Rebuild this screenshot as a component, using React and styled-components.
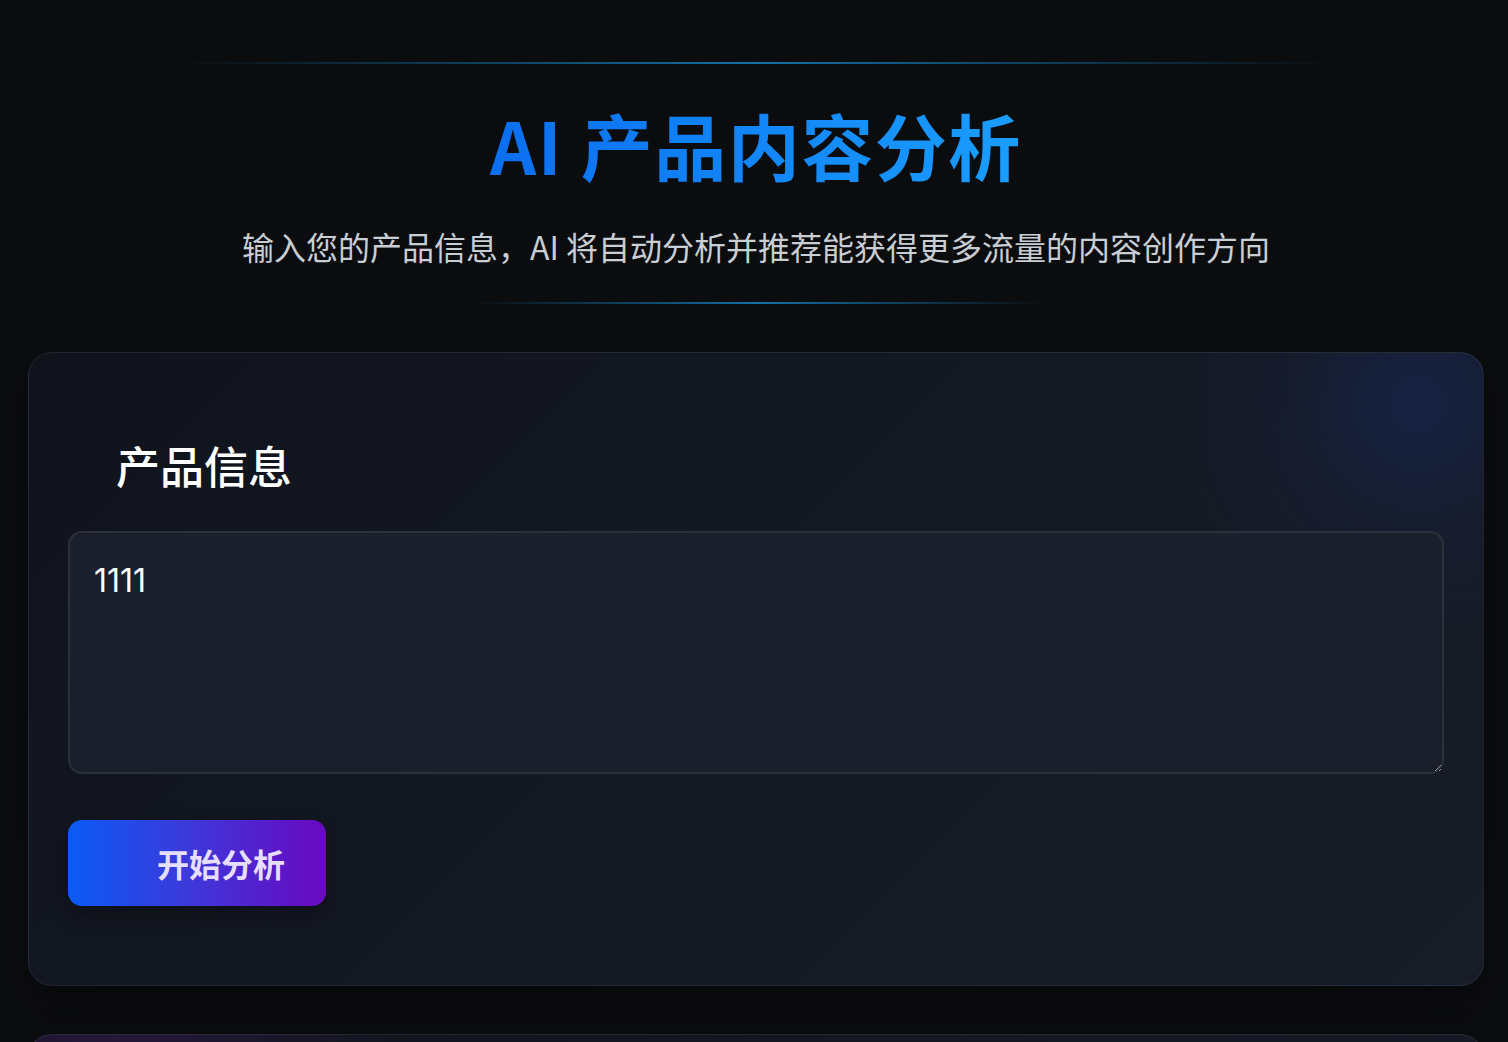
import React, { useState } from "react";
import styled, { createGlobalStyle } from "styled-components";

const Global = createGlobalStyle`
  html, body { margin: 0; padding: 0; background: #0b0c0e; }
  body {
    font-family: "Noto Sans CJK SC", "Noto Sans", Inter, sans-serif;
    color: #fff;
  }
  * { box-sizing: border-box; }
`;

const Page = styled.div`
  height: 1042px;
  padding: 62px 24px 0 28px;
  background: linear-gradient(180deg, #0b0c0e 0%, #0c0d10 100%);
  overflow: hidden;
`;

const Header = styled.header`
  display: flex;
  flex-direction: column;
  align-items: center;
`;

const Divider = styled.div`
  height: 2px;
  width: ${(p) => p.$w}px;
  margin-left: ${(p) => p.$shift || 0}px;
  background: linear-gradient(90deg, rgba(14, 165, 233, 0) 0%, rgba(22, 150, 225, 0.9) 50%, rgba(14, 165, 233, 0) 100%);
  opacity: 0.8;
`;

const Title = styled.h1`
  margin: 37px 0 0;
  font-size: 72px;
  line-height: 86px;
  font-weight: 700;
  letter-spacing: 1.5px;
  background: linear-gradient(90deg, #0b6ef0 0%, #1a9eff 100%);
  -webkit-background-clip: text;
  background-clip: text;
  color: transparent;
`;

const Subtitle = styled.p`
  margin: 35px 0 32px;
  font-size: 32px;
  line-height: 48px;
  letter-spacing: 0;
  color: #c9cdd4;
`;

const Card = styled.section`
  margin-top: 48px;
  border-radius: 24px;
  border: 1px solid rgba(255, 255, 255, 0.07);
  background:
    radial-gradient(circle at 95.5% 8%, rgba(24, 44, 100, 0.5) 0%, rgba(24, 44, 100, 0.15) 8%, rgba(24, 44, 100, 0) 16%),
    linear-gradient(135deg, #10131b 0%, #141924 55%, #171c27 100%);
  box-shadow: 0 20px 40px rgba(0, 0, 0, 0.35);
  padding: 84px 39px 79px;
`;

const NextCard = styled(Card)`
  height: 120px;
  padding: 0;
  background:
    radial-gradient(circle at 6% 0%, rgba(70, 30, 110, 0.35) 0%, rgba(70, 30, 110, 0) 20%),
    linear-gradient(135deg, #12141d 0%, #151a25 100%);
`;

const SectionTitle = styled.h2`
  margin: 0 0 37px;
  padding-left: 48px;
  font-size: 44px;
  line-height: 57px;
  font-weight: 500;
  color: #fff;
`;

const Input = styled.textarea`
  display: block;
  width: 100%;
  height: 243px;
  padding: 25px 24px 20px;
  border-radius: 14px;
  border: 2px solid #2a303c;
  background: #1a1f2b;
  color: #fff;
  font-family: Inter, "Noto Sans CJK SC", sans-serif;
  font-size: 32px;
  line-height: 46px;
  resize: vertical;
  outline: none;
`;

const Button = styled.button`
  margin-top: 46px;
  height: 86px;
  padding: 0 41px 0 89px;
  border: none;
  border-radius: 14px;
  background: linear-gradient(90deg, #0a5bf6 0%, #3b3adb 45%, #6a08c0 100%);
  color: #e6defe;
  font-family: "Noto Sans CJK SC", sans-serif;
  font-size: 32px;
  font-weight: 700;
  box-shadow: 0 8px 20px rgba(0, 0, 0, 0.3);
  cursor: pointer;
`;

export default function App() {
  const [value, setValue] = useState("1111");
  return (
    <Page>
      <Global />
      <Header>
        <Divider $w={1160} />
        <Title>AI 产品内容分析</Title>
        <Subtitle>输入您的产品信息，AI 将自动分析并推荐能获得更多流量的内容创作方向</Subtitle>
        <Divider $w={576} $shift={4} />
      </Header>
      <Card>
        <SectionTitle>产品信息</SectionTitle>
        <Input value={value} onChange={(e) => setValue(e.target.value)} />
        <Button>开始分析</Button>
      </Card>
      <NextCard />
    </Page>
  );
}
